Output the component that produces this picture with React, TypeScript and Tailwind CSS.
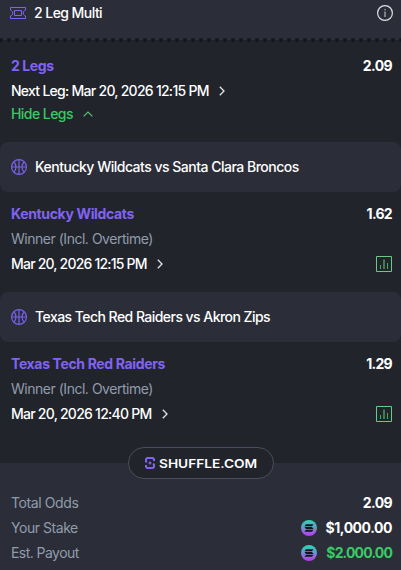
import React from "react";

const TicketIcon = () => (
  <svg width="16" height="12" viewBox="0 0 16 12" fill="none" stroke="#8063f5" className="shrink-0">
    <path d="M.5.5h15v2.6c-1.700.5-2.200 1.500-2.200 2.900s.5 2.400 2.200 2.900v2.600H.5V8.900c1.700-.5 2.200-1.500 2.200-2.900S2.200 3.600.5 3.100z" />
    <path d="M4.500 3.500h7v5h-7z" />
  </svg>
);

const InfoIcon = () => (
  <svg width="16" height="16" viewBox="0 0 16 16" fill="none" stroke="#dfe1e6" className="shrink-0">
    <circle cx="8" cy="8" r="7.4" strokeWidth="1.200" />
    <path d="M8 6.500V12M8 4v1.300" strokeWidth="1.300" stroke="#a9acb3" />
  </svg>
);

const BallIcon = () => (
  <svg width="16" height="16" viewBox="0 0 16 16" fill="none" stroke="#7a60ea" strokeWidth="1.200" className="shrink-0">
    <circle cx="8" cy="8" r="7.400" />
    <path d="M8 .5v15M.5 8h15M2.700 2.800c3.100 2.800 3.100 7.600 0 10.400M13.300 2.800c-3.100 2.800-3.100 7.600 0 10.400" />
  </svg>
);

const ChartIcon = () => (
  <svg width="16" height="16" viewBox="0 0 16 16" fill="none" className="shrink-0">
    <path d="M.5.5h15v15H.5z" stroke="#69cb7e" />
    <path d="M4.500 9v4M11.500 7v6" stroke="#56a068" />
    <path d="M8 3.500V13" stroke="#3f7c50" strokeWidth="2" />
  </svg>
);

const ChevronRight = () => (
  <svg width="6" height="10" viewBox="0 0 6 10" fill="none" stroke="#e4e5e8" strokeWidth="1.300" className="shrink-0">
    <path d="M.8.8 5 5 .8 9.200" />
  </svg>
);

const ChevronUp = () => (
  <svg width="10" height="6" viewBox="0 0 10 6" fill="none" stroke="#5fbd76" strokeWidth="1.200" className="shrink-0">
    <path d="M.6 5.400 5 1l4.400 4.400" />
  </svg>
);

const SolanaIcon = ({ id }: { id: string }) => (
  <svg width="16" height="16" viewBox="0 0 16 16" className="shrink-0">
    <defs>
      <linearGradient id={id} x1="0" y1="0" x2="0" y2="1">
        <stop offset="0" stopColor="#1ee0b0" />
        <stop offset=".5" stopColor="#6f8fd0" />
        <stop offset="1" stopColor="#c333f2" />
      </linearGradient>
    </defs>
    <circle cx="8" cy="8" r="8" fill={`url(#${id})`} />
    <path d="M5 4.300h7.500L11 6.200H3.500zM3.500 7h7.500l1.500 1.900H5zM5 9.800h7.500L11 11.700H3.500z" fill="#14141f" />
  </svg>
);

const ShuffleLogo = () => (
  <svg width="10" height="12" viewBox="0 0 10 12" fill="none" stroke="#8063f5" strokeWidth="2" className="shrink-0">
    <path d="M9 4V2.200L7.800 1H2.200L1 2.200v2.300l1 .8M1 8v1.800L2.200 11h5.600L9 9.800V7.500l-1-.8" />
    <path d="m5 3.800.7 1.500 1.500.7-1.500.7L5 8.200l-.7-1.500L2.800 6l1.500-.7z" fill="#8063f5" stroke="none" />
  </svg>
);

const legs = [
  {
    match: "Kentucky Wildcats vs Santa Clara Broncos",
    matchClass: "tracking-[-0.5px]",
    team: "Kentucky Wildcats",
    odds: "1.62",
    date: "Mar 20, 2026 12:15 PM",
    dateClass: "tracking-[-0.8px]",
  },
  {
    match: "Texas Tech Red Raiders vs Akron Zips",
    matchClass: "tracking-[-0.54px]",
    team: "Texas Tech Red Raiders",
    odds: "1.29",
    date: "Mar 20, 2026 12:40 PM",
    dateClass: "tracking-[-0.75px]",
  },
];

const Leg = ({ leg }: { leg: (typeof legs)[number] }) => (
  <section className="h-[150px]">
    <div className="flex h-[50px] items-center gap-2 rounded-lg bg-[#2b2e38] pl-[11px]">
      <BallIcon />
      <span className={`pb-0.5 font-medium ${leg.matchClass}`}>{leg.match}</span>
    </div>
    <div className="pt-[9px] pr-[9px] pl-[11px] leading-[25px]">
      <div className="flex justify-between font-bold">
        <span className="tracking-[-0.35px] text-[#8063f5]">{leg.team}</span>
        <span className="tracking-[-0.7px]">{leg.odds}</span>
      </div>
      <p className="tracking-[-0.48px] text-[#919cab]">Winner (Incl. Overtime)</p>
      <div className="flex items-center justify-between">
        <div className="flex items-center gap-[10px]">
          <span className={`font-medium ${leg.dateClass}`}>{leg.date}</span>
          <ChevronRight />
        </div>
        <ChartIcon />
      </div>
    </div>
  </section>
);

const App = () => {
  return (
    <main className="h-[570px] w-[401px] overflow-hidden bg-[#21242b] font-['Inter',sans-serif] text-[14px] whitespace-nowrap text-white">
      <header className="flex h-[38px] items-center justify-between bg-[#2b2e38] pr-2 pb-3 pl-[10px]">
        <div className="flex items-center gap-2">
          <TicketIcon />
          <span className="pb-0.5 font-medium tracking-[-0.55px]">2 Leg Multi</span>
        </div>
        <InfoIcon />
      </header>
      <svg width="401" height="4" className="block bg-[#2b2e38]">
        <path d="M0 2h401v2H0z" fill="#21242b" />
        <path d="M1 2h408" stroke="#14161a" strokeWidth="4" strokeLinecap="round" strokeDasharray="0 8" />
      </svg>

      <section className="h-[100px] pt-[11px] pr-[9px] pl-[11px]">
        <div className="flex justify-between leading-[25px] font-bold">
          <span className="tracking-[-0.4px] text-[#8063f5]">2 Legs</span>
          <span className="tracking-[-0.6px]">2.09</span>
        </div>
        <div className="flex items-center gap-[10px] leading-[25px]">
          <span className="font-medium tracking-[-0.73px]">Next Leg: Mar 20, 2026 12:15 PM</span>
          <ChevronRight />
        </div>
        <div className="flex items-center gap-[10px] leading-[22px] text-[#38cb65]">
          <span className="font-medium tracking-[-0.55px]">Hide Legs</span>
          <ChevronUp />
        </div>
      </section>

      {legs.map((leg) => (
        <Leg key={leg.match} leg={leg} />
      ))}

      <footer className="relative mt-[21px] h-[107px] bg-[#2b2e38] pt-[27px] pr-[9px] pl-[11px] leading-[25px]">
        <div className="absolute -top-4 left-[128px] flex h-8 w-[146px] items-center gap-1 rounded-full border border-[#4b4e5b] bg-[#21242b] pl-4">
          <ShuffleLogo />
          <span className="origin-left scale-x-[1.14] text-[12px] font-semibold">SHUFFLE.COM</span>
        </div>
        <div className="flex justify-between">
          <span className="tracking-[-0.4px] text-[#919cab]">Total Odds</span>
          <span className="font-bold tracking-[-0.6px]">2.09</span>
        </div>
        <div className="flex justify-between">
          <span className="tracking-[-0.45px] text-[#919cab]">Your Stake</span>
          <div className="flex items-center gap-[9px]">
            <SolanaIcon id="stake" />
            <span className="font-bold tracking-[-0.45px]">$1,000.00</span>
          </div>
        </div>
        <div className="flex justify-between">
          <span className="tracking-[-0.55px] text-[#919cab]">Est. Payout</span>
          <div className="flex items-center gap-[9px]">
            <SolanaIcon id="payout" />
            <span className="font-bold tracking-[-0.85px] text-[#38cb65]">$2.000.00</span>
          </div>
        </div>
      </footer>
    </main>
  );
};

export default App;
